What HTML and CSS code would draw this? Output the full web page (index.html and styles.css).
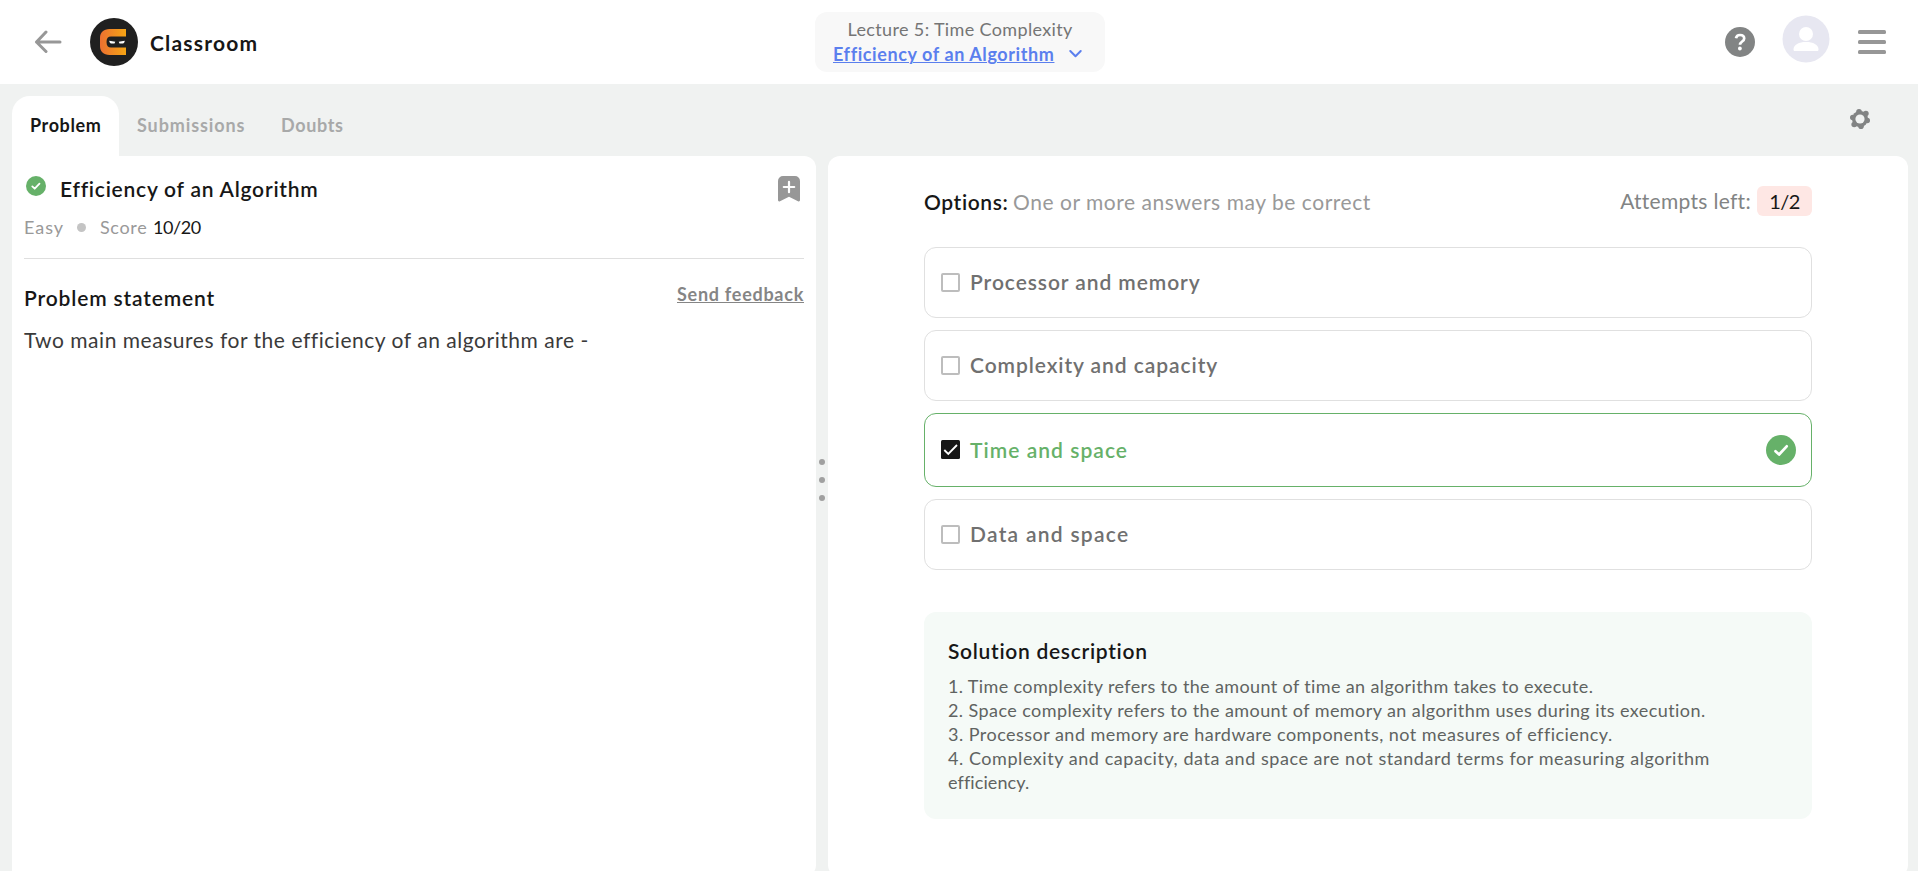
FILE: index.html
```
<!DOCTYPE html>
<html lang="en">
<head>
<meta charset="utf-8">
<title>Classroom</title>
<link rel="stylesheet" href="styles.css">
</head>
<body>
<header class="header">
  <div class="brand">
    <svg class="back" width="28" height="24" viewBox="0 0 28 24" fill="none" stroke="#979797" stroke-width="3" stroke-linecap="round" stroke-linejoin="round"><path d="M26 12H2.500M12 2L2.500 12L12 21.500"/></svg>
    <svg class="logo" width="48" height="48" viewBox="0 0 48 48">
      <defs><linearGradient id="g" x1="0" x2="1"><stop offset="0" stop-color="#ec7031"/><stop offset="1" stop-color="#f6a514"/></linearGradient></defs>
      <circle cx="24" cy="24" r="24" fill="#202020"/>
      <path d="M36 11H19.500C13.500 11 10 14.500 10 20v8c0 5.500 3.500 9 9.500 9H36v-7.500H21c-3 0-4.500-1.800-4.500-5.500s1.500-5.500 4.500-5.500H36z" fill="url(#g)"/>
      <path d="M19.300 22.700l6 1-.8 1.700h-3.200c-1.400 0-2-1.300-2-2.700zM34.700 22.700l-6 1 .8 1.700h3.200c1.400 0 2-1.300 2-2.700z" fill="#fff"/>
    </svg>
    <span class="brand-name">Classroom</span>
  </div>
  <nav class="lesson">
    <div class="lesson-topic">Lecture 5: Time Complexity</div>
    <div class="lesson-current">
      <a class="lesson-link">Efficiency of an Algorithm</a>
      <svg width="14" height="10" viewBox="0 0 14 10" fill="none" stroke="#5b7fee" stroke-width="2" stroke-linecap="round" stroke-linejoin="round"><path d="M2.300 2L7.500 7.200L12.700 2"/></svg>
    </div>
  </nav>
  <div class="tools">
    <svg class="help" width="30" height="30" viewBox="0 0 30 30"><circle cx="15" cy="15" r="15" fill="#828484"/><path d="M11 11.200C11.400 9 12.900 8 15 8c2.400 0 4.200 1.300 4.200 3.400 0 3.200-4.200 3-4.200 6.400" fill="none" stroke="#fff" stroke-width="2.700"/><circle cx="14.900" cy="21.500" r="1.900" fill="#fff"/></svg>
    <svg class="avatar" width="48" height="48" viewBox="0 0 48 48"><circle cx="24" cy="24" r="23.500" fill="#e7e7f1"/><circle cx="24" cy="19" r="7" fill="#fff"/><path d="M11.500 34.500c0-5 5.500-7.500 12.500-7.500s12.500 2.500 12.500 7.500c0 1-.6 1.500-1.500 1.500H13c-.9 0-1.500-.5-1.500-1.500z" fill="#fff"/></svg>
    <svg class="menu" width="28" height="24" viewBox="0 0 28 24" fill="#979797"><rect width="28" height="4" rx="1.500"/><rect y="10" width="28" height="4" rx="1.500"/><rect y="20" width="28" height="4" rx="1.500"/></svg>
  </div>
</header>

<div class="tabs">
  <div class="tab tab-active">Problem</div>
  <div class="tab tab-submissions">Submissions</div>
  <div class="tab tab-doubts">Doubts</div>
  <svg class="gear" width="20" height="20" viewBox="0 0 20 20"><g fill="#828484"><circle cx="10" cy="10" r="8"/><circle cx="9" cy="2.800" r="2.800"/><circle cx="15.900" cy="4.500" r="2.800"/><circle cx="17.200" cy="11.500" r="2.800"/><circle cx="11" cy="17.200" r="2.800"/><circle cx="4.200" cy="15.500" r="2.800"/><circle cx="2.800" cy="8.500" r="2.800"/></g><circle cx="10" cy="10" r="4.600" fill="#f0f2f1"/></svg>
</div>

<main class="workspace">
  <section class="problem">
    <div class="title-row">
      <svg width="20" height="20" viewBox="0 0 20 20"><circle cx="10" cy="10" r="10" fill="#66b169"/><path d="M6.300 10.400l2.400 2.300 4.800-5" fill="none" stroke="#fff" stroke-width="1.800" stroke-linecap="round" stroke-linejoin="round"/></svg>
      <h1 class="title">Efficiency of an Algorithm</h1>
      <svg class="bookmark" width="22" height="26" viewBox="0 0 22 26"><path d="M5 0h12a5 5 0 0 1 5 5v19c0 1.300-.9 1.700-2 1.200L11 20.800l-9 4.400C.9 25.700 0 25.300 0 24V5a5 5 0 0 1 5-5z" fill="#979797"/><path d="M11 5.800v10.400M5.800 11h10.400" stroke="#fff" stroke-width="2.200" stroke-linecap="round"/></svg>
    </div>
    <div class="meta"><span class="level">Easy</span><i class="meta-dot"></i><span class="score">Score</span><span class="points">10/20</span></div>
    <div class="statement-head">
      <h2 class="statement-title">Problem statement</h2>
      <a class="feedback">Send feedback</a>
    </div>
    <p class="statement">Two main measures for the efficiency of an algorithm are -</p>
  </section>

  <div class="splitter"><i></i><i></i><i></i></div>

  <section class="answers">
    <div class="answers-head">
      <div class="prompt"><span class="prompt-label">Options:</span><span class="prompt-text">One or more answers may be correct</span></div>
      <div class="attempts"><span class="attempts-label">Attempts left:</span><span class="attempts-count">1/2</span></div>
    </div>
    <div class="options">
      <div class="option"><i class="box"></i><span class="o1">Processor and memory</span></div>
      <div class="option"><i class="box"></i><span class="o2">Complexity and capacity</span></div>
      <div class="option option-correct">
        <svg class="checked" width="19" height="19" viewBox="0 0 19 19"><rect width="19" height="19" rx="1.500" fill="#171717"/><path d="M3.300 10l4 4L16 5" fill="none" stroke="#fff" stroke-width="1.800"/></svg>
        <span class="o3">Time and space</span>
        <svg class="tick" width="30" height="30" viewBox="0 0 30 30"><circle cx="15" cy="15" r="15" fill="#66b169"/><path d="M9.500 16.200l3.600 3.300 7.600-8.200" fill="none" stroke="#fff" stroke-width="2.700" stroke-linecap="round" stroke-linejoin="round"/></svg>
      </div>
      <div class="option"><i class="box"></i><span class="o4">Data and space</span></div>
    </div>
    <div class="solution">
      <h2 class="solution-title">Solution description</h2>
      <p class="s1">1. Time complexity refers to the amount of time an algorithm takes to execute.</p>
      <p class="s2">2. Space complexity refers to the amount of memory an algorithm uses during its execution.</p>
      <p class="s3">3. Processor and memory are hardware components, not measures of efficiency.</p>
      <p class="s4">4. Complexity and capacity, data and space are not standard terms for measuring algorithm <span class="s5">efficiency.</span></p>
    </div>
  </section>
</main>
</body>
</html>
```
FILE: styles.css
```
* { box-sizing: border-box; margin: 0; }
html { overflow: hidden; }
body {
  height: 871px;
  overflow: hidden;
  background: #f0f2f1;
  font: 400 18px/24px Lato, "Open Sans", sans-serif;
  color: #171717;
}
svg { display: block; flex: none; }
h1, h2 { font-size: 21px; line-height: 24px; font-weight: 600; }
span, a, h1, h2 { white-space: nowrap; }

.header {
  height: 84px;
  background: #fff;
  display: grid;
  grid-template-columns: 1fr 290px 1fr;
  padding: 0 31px 0 33px;
}
.brand { display: flex; align-items: center; padding-left: 1px; }
.logo { margin: 0 12px 0 28px; }
.brand-name { font-size: 21px; font-weight: 700; letter-spacing: 1.2px; padding-top: 1px; }
.lesson {
  height: 60px;
  margin-top: 12px;
  padding: 5px 0 0 18px;
  border-radius: 12px;
  background: #f8f8f8;
}
.lesson-topic { color: #757575; letter-spacing: .36px; padding-left: 14.5px; }
.lesson-current { display: flex; align-items: center; gap: 14px; color: #5b7fee; padding-top: 1px; }
.lesson-link { font-weight: 700; letter-spacing: .59px; text-decoration: underline; text-decoration-thickness: 1px; text-underline-offset: 1px; }
.tools { display: flex; justify-content: flex-end; align-items: flex-start; padding-right: 1px; }
.help { margin-top: 27px; }
.avatar { margin: 15px 28px 0 27px; }
.menu { margin-top: 30px; }

.tabs { height: 72px; padding: 12px 48px 0 12px; display: flex; }
.tab { height: 60px; padding: 17px 18px 0; color: #a8a9a9; font-weight: 700; }
.tab-active {
  width: 107px;
  background: #fff;
  color: #171717;
  border-radius: 18px 18px 0 0;
  letter-spacing: .6px;
}
.tab-submissions { width: 144px; letter-spacing: .9px; }
.tab-doubts { letter-spacing: .65px; }
.gear { margin: 13px 0 0 auto; }

.workspace { display: flex; padding: 0 10px 0 12px; height: 721px; }
.problem {
  width: 804px;
  padding: 20px 12px 0;
  background: #fff;
  border-radius: 0 12px 12px 0;
}
.title-row { display: flex; align-items: flex-start; padding-left: 2px; height: 39px; }
.title { margin: 1px 0 0 14px; letter-spacing: .76px; }
.bookmark { margin: 0 4px 0 auto; }
.meta {
  display: flex;
  align-items: center;
  height: 44px;
  padding-bottom: 19px;
  border-bottom: 1px solid #dfdfdf;
  color: #999;
}
.level { letter-spacing: 1px; width: 53px; }
.meta-dot { width: 9px; height: 9px; border-radius: 50%; background: #c4c4c4; }
.score { margin-left: 14px; width: 53px; letter-spacing: .65px; }
.points { color: #171717; letter-spacing: -.4px; }
.statement-head { display: flex; justify-content: space-between; padding-top: 23px; }
.statement-title { margin-top: 4px; letter-spacing: .85px; }
.feedback {
  color: #858585;
  font-weight: 700;
  letter-spacing: .73px;
  text-decoration: underline;
  text-decoration-thickness: 1px;
  text-underline-offset: 1px;
}
.statement { margin-top: 18px; font-size: 21px; letter-spacing: .53px; color: #3a3a3a; }

.splitter {
  width: 12px;
  display: flex;
  flex-direction: column;
  align-items: center;
  gap: 12px;
  padding-top: 303px;
}
.splitter i { width: 6px; height: 6px; border-radius: 50%; background: #a0a0a0; }

.answers { flex: 1; padding: 30px 96px 0; background: #fff; border-radius: 12px; }
.answers-head { display: flex; justify-content: space-between; height: 30px; margin-bottom: 31px; font-size: 21px; }
.prompt { padding-top: 4px; display: flex; }
.prompt-label { font-weight: 600; letter-spacing: .6px; width: 89px; }
.prompt-text { color: #999; letter-spacing: .54px; }
.attempts { display: flex; line-height: 30px; color: #828484; }
.attempts-label { letter-spacing: .3px; margin-right: 6px; }
.attempts-count {
  width: 55px;
  border-radius: 6px;
  background: #fee7e4;
  color: #171717;
  font-size: 20px;
  letter-spacing: -.5px;
  text-align: center;
}
.options { display: flex; flex-direction: column; gap: 12px; }
.option {
  height: 71px;
  padding: 0 15px 0 16px;
  display: flex;
  align-items: center;
  gap: 10px;
  border: 1px solid #e0e0e0;
  border-radius: 12px;
  font-size: 21px;
  font-weight: 600;
  color: #707070;
}
.option span { padding-bottom: 1px; }
.option-correct { height: 74px; border-color: #66b169; color: #66b169; }
.option-correct span { padding-bottom: 0; }
.box { width: 19px; height: 19px; border: 2px solid #bdbdbd; border-radius: 2px; }
.checked { margin-bottom: 1px; }
.tick { margin-left: auto; }
.o1 { letter-spacing: .93px; }
.o2 { letter-spacing: .93px; }
.o3 { letter-spacing: 1.04px; }
.o4 { letter-spacing: 1.27px; }

.solution {
  height: 207px;
  margin-top: 42px;
  padding: 27px 24px 0;
  border-radius: 12px;
  background: #f5faf7;
  color: #606361;
}
.solution-title { color: #171717; letter-spacing: .7px; margin-bottom: 11px; }
.s1 { letter-spacing: .37px; }
.s2 { letter-spacing: .42px; }
.s3 { letter-spacing: .47px; }
.s4 { letter-spacing: .55px; }
.s5 { letter-spacing: .1px; }
```
